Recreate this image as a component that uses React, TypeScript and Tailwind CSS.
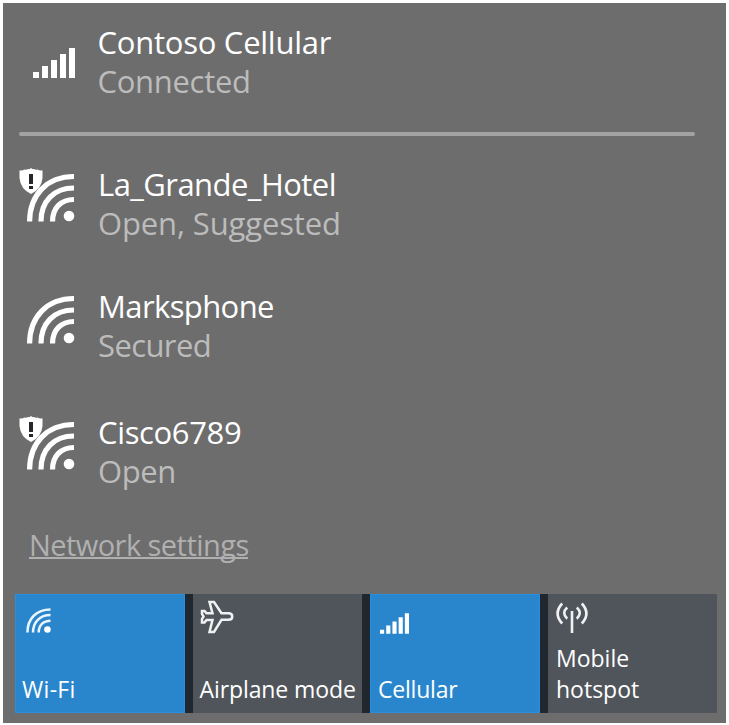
type Network = {
  name: string;
  status: string;
  open?: boolean;
  row: string;
  nameStyle: string;
  statusStyle: string;
};

const networks: Network[] = [
  { name: 'La_Grande_Hotel', status: 'Open, Suggested', open: true, row: 'mt-[29px] h-[122px]', nameStyle: 'tracking-[-0.55px]', statusStyle: 'tracking-[-0.13px]' },
  { name: 'Marksphone', status: 'Secured', row: 'h-[126px]', nameStyle: 'tracking-[-0.6px]', statusStyle: 'tracking-[-0.6px]' },
  { name: 'Cisco6789', status: 'Open', open: true, row: 'h-[113px]', nameStyle: 'tracking-[-0.35px]', statusStyle: 'tracking-[-0.45px]' },
];

function Bars({ className }: { className: string }) {
  return (
    <svg viewBox="0 0 42 30" className={className} fill="currentColor">
      <path d="M0 24h6v6H0zM9 18h6v12H9zM18 12h6v18h-6zM27 6h6v24h-6zM36 0h6v30h-6z" />
    </svg>
  );
}

function Wifi({ shield }: { shield?: boolean }) {
  return (
    <svg viewBox="0 0 56 55" className="h-[55px] w-[56px] shrink-0">
      <g fill="none" stroke="#fff" strokeWidth="5.2">
        <path d="M10.6 54.5C10.6 28 28 9.500 55 9.500" />
        <path d="M22 54.5C22 34 35 21 55 21" />
        <path d="M33.5 54.5C33.5 41 42 32.500 55 32.500" />
      </g>
      <circle cx="50" cy="49" r="5.3" fill="#fff" />
      {shield && (
        <>
          <path d="M.5 3.2Q3 4 5.500 2.500Q7 3 8.500 2.300Q11 2 12 .9Q13 2 15.500 2.300Q17 3 18.500 2.500Q21 4 23.500 3.200V11Q22.500 22 12 27Q1.500 22 .5 11Z" fill="#fff" />
          <path d="M10 7h4v10h-4zM10 19h4v3h-4z" fill="#25272b" />
        </>
      )}
    </svg>
  );
}

function TileWifi() {
  return (
    <svg viewBox="0 0 26 26" className="h-[25px] w-[25px]">
      <g fill="none" stroke="#ecf5fc" strokeWidth="2.6">
        <path d="M1.500 25.500C1.500 11 11 1.500 25.500 1.500M7.300 25.500C7.300 14.500 14.500 7.300 25.500 7.300M13.200 25.500C13.200 18 18 13.200 25.500 13.200" />
      </g>
      <circle cx="22.300" cy="22.300" r="3.400" fill="#fff" />
    </svg>
  );
}

function Airplane() {
  return (
    <svg viewBox="0 0 34 34" className="h-[34px] w-[34px]" fill="none" stroke="#f0f1f2" strokeWidth="2.500" strokeLinejoin="miter">
      <path d="M9.500 2h4.500L21.500 13.200H28.500C33.500 13.200 33.500 19.800 28.500 19.800H21.500L14 32H9.500L12.500 20H6.500L4.500 22.500H2V19L3.500 16.500L2 14V11H4.500L6.500 13.200H12.500Z" />
    </svg>
  );
}

function Hotspot() {
  return (
    <svg viewBox="0 0 32 31" className="h-[31px] w-[32px]" fill="none" stroke="#f0f1f2" strokeWidth="2.600">
      <path d="M16 9v22M11.200 5.500Q5.200 11 11.200 16.700M20.800 5.500Q26.800 11 20.800 16.700M6.200 1.500Q-3 11.500 6.200 21.500M25.800 1.500Q35 11.500 25.800 21.500" />
    </svg>
  );
}

export default function App() {
  return (
    <main className="h-[725px] w-[729px] overflow-hidden bg-white p-[3px] font-['Open_Sans','Noto_Sans',sans-serif] text-white">
      <section className="flex h-[720px] w-[723px] flex-col bg-[#6d6d6d]">
        <div className="flex h-[129px] pt-[20px] text-[31px] leading-[38px]">
          <div className="w-[94.500px] shrink-0 pt-[25px] pl-[30px]">
            <Bars className="h-[30px] w-[42px]" />
          </div>
          <div>
            <div className="tracking-[-0.25px]">Contoso Cellular</div>
            <div className="pt-[1px] tracking-[-0.3px] text-[#bcbcbc]">Connected</div>
          </div>
        </div>
        <hr className="ml-[16px] h-[4px] w-[676px] shrink-0 rounded-full border-0 bg-[#a3a3a3]" />

        {networks.map((n) => (
          <div key={n.name} className={`flex text-[31px] leading-[38px] ${n.row}`}>
            <div className="w-[95px] shrink-0 pt-[2px] pl-[16px]">
              <Wifi shield={n.open} />
            </div>
            <div>
              <div className={n.nameStyle}>{n.name}</div>
              <div className={`pt-[1px] text-[#bcbcbc] ${n.statusStyle}`}>{n.status}</div>
            </div>
          </div>
        ))}

        <a className="ml-[26px] h-[33px] w-[219px] shrink-0 border-b-2 border-[#b0b0b0] text-[29px] leading-[38px] tracking-[-0.55px] whitespace-nowrap text-[#b0b0b0]">
          Network settings
        </a>

        <div className="mt-[35px] ml-[12px] flex h-[119px] w-[702px] shrink-0 gap-[8px] bg-[#20272f] text-[23px] leading-[31px] font-medium">
          <div className="flex w-[169.500px] flex-col justify-between border border-[#268fdf] bg-[#2986cd] px-[6px] pt-[13px] pb-[7px]">
            <div className="pl-[4px]"><TileWifi /></div>
            <span className="tracking-[0.3px]">Wi-Fi</span>
          </div>
          <div className="flex w-[169.500px] flex-col justify-between bg-[#50555c] pt-[6px] pb-[8px] pl-[7px]">
            <Airplane />
            <span className="tracking-[-0.1px] whitespace-nowrap">Airplane mode</span>
          </div>
          <div className="flex w-[170px] flex-col justify-between border border-[#268fdf] bg-[#2986cd] px-[7px] pt-[18px] pb-[7px]">
            <div className="pl-[2px]"><Bars className="h-[21px] w-[29px]" /></div>
            <span className="tracking-[-0.2px]">Cellular</span>
          </div>
          <div className="flex w-[169px] flex-col justify-between bg-[#50555c] pt-[8px] pb-[8px] pl-[8px]">
            <Hotspot />
            <span>Mobile<br />hotspot</span>
          </div>
        </div>
      </section>
    </main>
  );
}
